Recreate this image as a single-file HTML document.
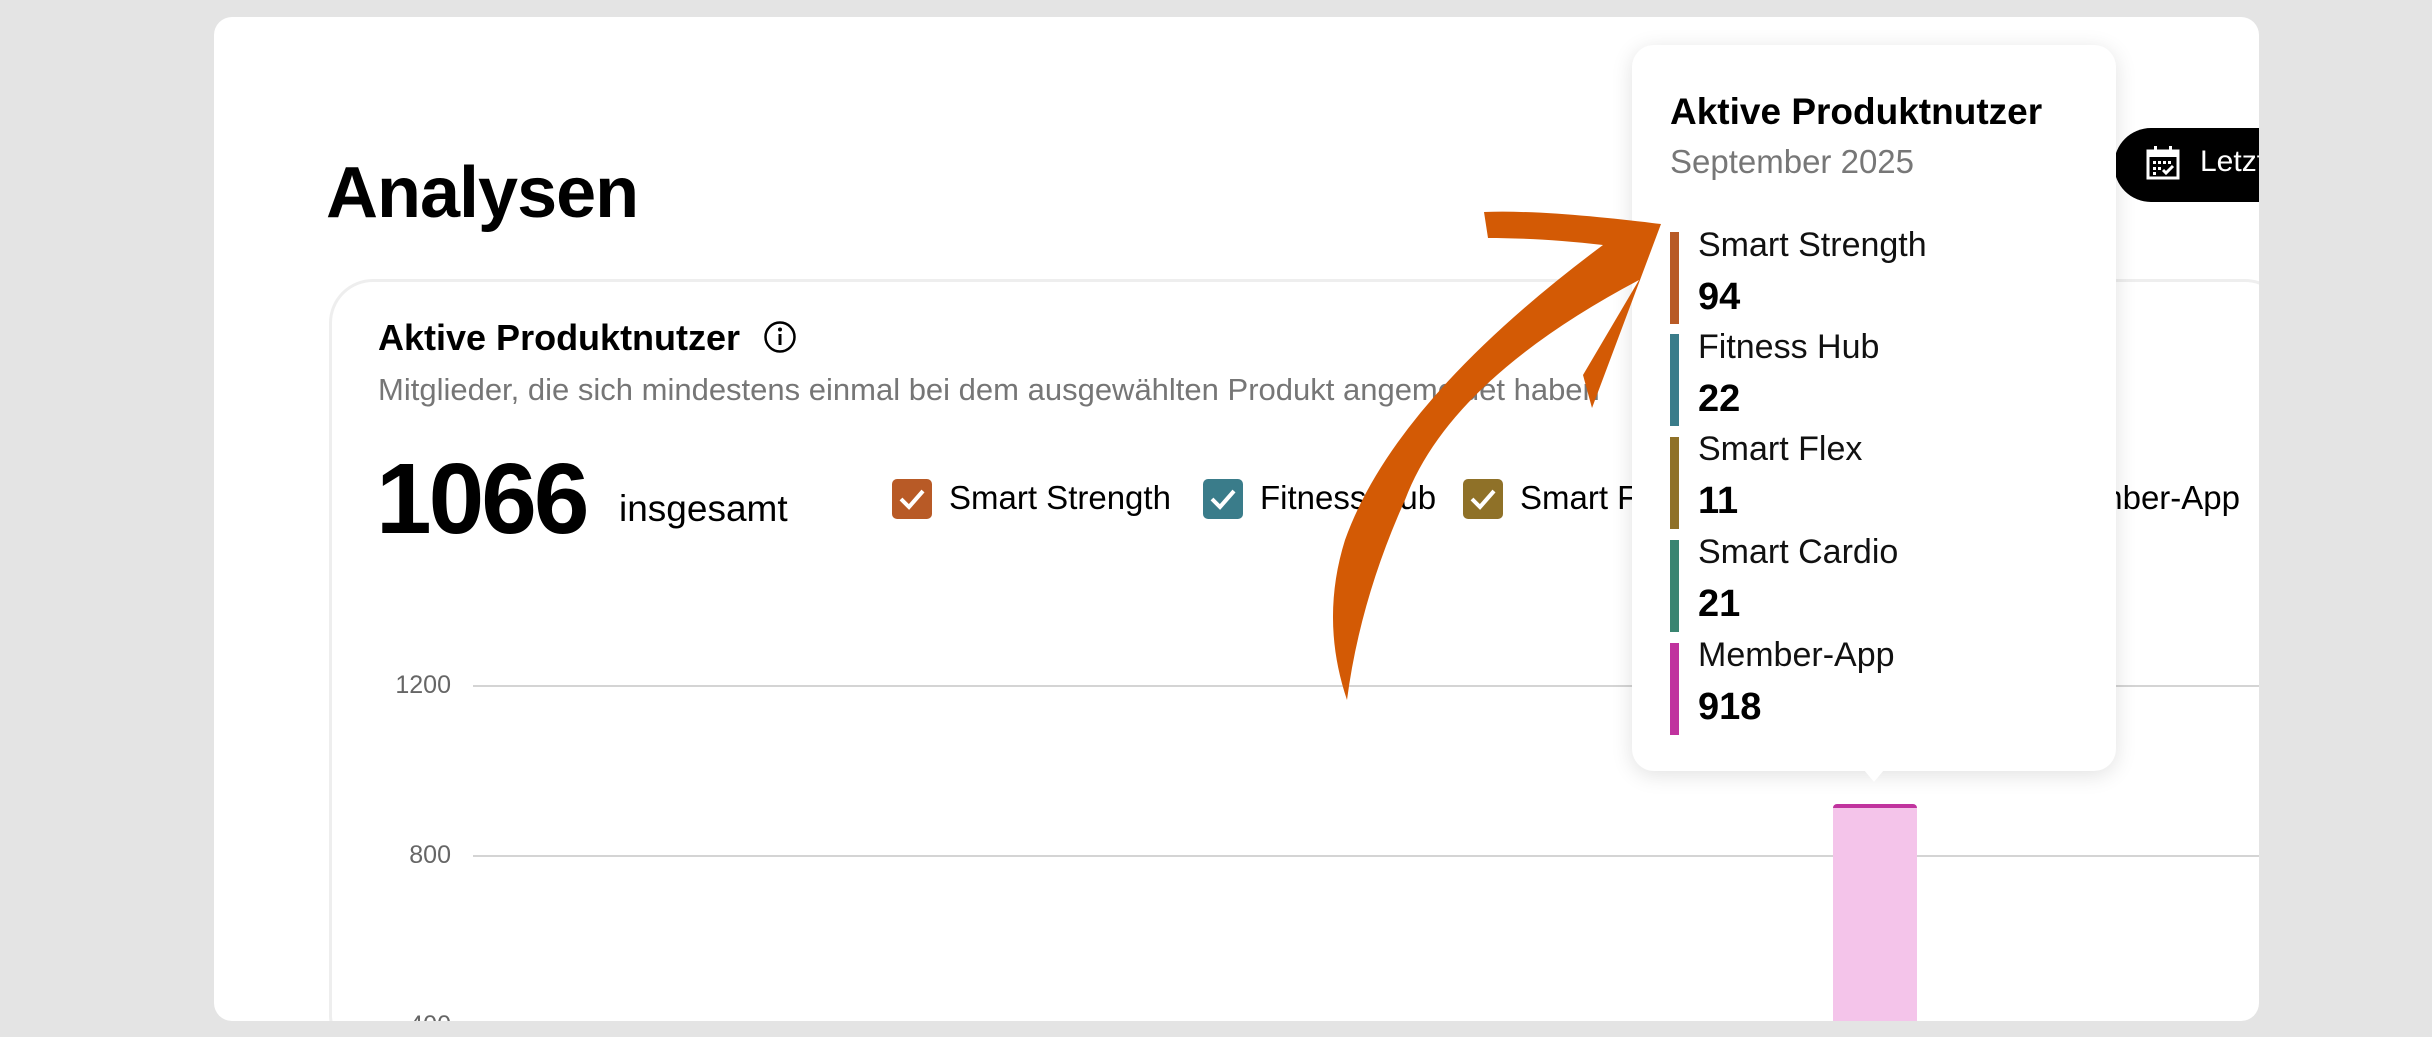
<!DOCTYPE html>
<html><head><meta charset="utf-8"><style>
*{margin:0;padding:0;box-sizing:border-box}
html,body{width:2432px;height:1037px;overflow:hidden}
body{background:#e4e4e4;position:relative;font-family:"Liberation Sans",Arial,sans-serif;color:#000}
.card{position:absolute;left:214px;top:17px;width:2045px;height:1004px;background:#fff;border-radius:18px;overflow:hidden}
.a{position:absolute;white-space:nowrap}
.inner{position:absolute;left:115px;top:262px;width:1960px;height:780px;border:3px solid #eeeeee;border-radius:44px}
.cb{position:absolute;width:40px;height:40px;border-radius:5px}
.cb svg{position:absolute;left:6px;top:7px}
.grid{position:absolute;left:259px;height:2px;background:#d4d4d4;width:1790px}
.tt{position:absolute;left:1632px;top:45px;width:484px;height:726px;background:#fff;border-radius:22px;box-shadow:0 4px 22px rgba(0,0,0,.12)}
.ent{position:absolute;left:38px;width:9px;height:92px}
.nm{position:absolute;left:66px;font-size:34px;color:#111}
.vl{position:absolute;left:66px;font-size:38px;font-weight:bold}
</style></head><body>
<div class="card">
  <div class="a" style="left:112px;top:135px;font-size:72px;font-weight:bold;letter-spacing:-1px">Analysen</div>
  <div class="a" style="left:1900px;top:111px;width:300px;height:74px;background:#000;border-radius:37px"></div>
  <svg class="a" style="left:1931px;top:128px" width="36" height="36" viewBox="0 0 36 36"><rect x="3" y="6" width="30" height="27" fill="none" stroke="#fff" stroke-width="3"/><rect x="3" y="6" width="30" height="6" fill="#fff"/><rect x="9" y="1" width="3" height="7" fill="#fff"/><rect x="24" y="1" width="3" height="7" fill="#fff"/><g fill="#fff"><rect x="8" y="16" width="3" height="3"/><rect x="13" y="16" width="3" height="3"/><rect x="18" y="16" width="3" height="3"/><rect x="23" y="16" width="3" height="3"/><rect x="8" y="22" width="3" height="3"/><rect x="13" y="22" width="3" height="3"/><rect x="8" y="27" width="3" height="3"/></g><path d="M18 25 L21 28 L28 21" stroke="#fff" stroke-width="3" fill="none"/></svg>
  <div class="a" style="left:1986px;top:128px;font-size:30px;color:#fff">Letzte</div>
  <div class="inner"></div>
  <div class="a" style="left:164px;top:300px;font-size:36px;font-weight:bold">Aktive Produktnutzer</div>
  <svg class="a" style="left:549px;top:303px" width="34" height="34" viewBox="0 0 34 34"><circle cx="17" cy="17" r="14.5" fill="none" stroke="#000" stroke-width="2.5"/><rect x="15.5" y="14" width="3" height="11" fill="#000"/><circle cx="17" cy="9.5" r="2" fill="#000"/></svg>
  <div class="a" style="left:164px;top:355px;font-size:31px;color:#767676">Mitglieder, die sich mindestens einmal bei dem ausgewählten Produkt angemeldet haben</div>
  <div class="a" style="left:162px;top:425px;font-size:100px;font-weight:bold;letter-spacing:-3px">1066</div>
  <div class="a" style="left:405px;top:471px;font-size:37px">insgesamt</div>
  <div class="cb" style="left:678px;top:462px;background:#b85a26"><svg width="28" height="26"><path d="M3 13 L11 21 L25 5" stroke="#fff" stroke-width="4" fill="none"/></svg></div>
  <div class="a" style="left:735px;top:462px;font-size:33px">Smart Strength</div>
  <div class="cb" style="left:989px;top:462px;background:#3a7c8a"><svg width="28" height="26"><path d="M3 13 L11 21 L25 5" stroke="#fff" stroke-width="4" fill="none"/></svg></div>
  <div class="a" style="left:1046px;top:462px;font-size:33px">Fitness Hub</div>
  <div class="cb" style="left:1249px;top:462px;background:#8f7128"><svg width="28" height="26"><path d="M3 13 L11 21 L25 5" stroke="#fff" stroke-width="4" fill="none"/></svg></div>
  <div class="a" style="left:1306px;top:462px;font-size:33px">Smart Flex</div>
  <div class="a" style="right:19px;top:462px;font-size:33px">Member-App</div>
  <div class="grid" style="top:668px"></div>
  <div class="grid" style="top:838px"></div>
  <div class="a" style="left:150px;top:654px;width:87px;text-align:right;font-size:25px;color:#666">1200</div>
  <div class="a" style="left:150px;top:824px;width:87px;text-align:right;font-size:25px;color:#666">800</div>
  <div class="a" style="left:150px;top:994px;width:87px;text-align:right;font-size:25px;color:#666">400</div>
  <div class="a" style="left:1619px;top:787px;width:84px;height:220px;background:#f4c4ea;border-radius:4px 4px 0 0;border-top:4px solid #c0339e"></div>
</div>
<div class="tt">
  <div class="a" style="left:38px;top:46px;font-size:37px;font-weight:bold">Aktive Produktnutzer</div>
  <div class="a" style="left:38px;top:98px;font-size:33px;color:#777">September 2025</div>
  <div class="ent" style="top:187px;background:#b85a26"></div>
  <div class="nm" style="top:181px">Smart Strength</div><div class="vl" style="top:231px">94</div>
  <div class="ent" style="top:289px;background:#3a7c8a"></div>
  <div class="nm" style="top:283px">Fitness Hub</div><div class="vl" style="top:333px">22</div>
  <div class="ent" style="top:392px;background:#8f7128"></div>
  <div class="nm" style="top:385px">Smart Flex</div><div class="vl" style="top:435px">11</div>
  <div class="ent" style="top:495px;background:#3a8571"></div>
  <div class="nm" style="top:488px">Smart Cardio</div><div class="vl" style="top:538px">21</div>
  <div class="ent" style="top:598px;background:#c0339e"></div>
  <div class="nm" style="top:591px">Member-App</div><div class="vl" style="top:641px">918</div>
</div>
<div class="a" style="left:1864px;top:770px;width:0;height:0;border-left:10px solid transparent;border-right:10px solid transparent;border-top:12px solid #fff"></div>
<svg class="a" style="left:0;top:0" width="2432" height="1037"><path d="M1484,212 C1540,210 1610,218 1661,224 L1592,408 L1583,375 L1639,280 Q1450,380 1405,500 Q1360,600 1347,700 Q1320,620 1345,540 Q1395,400 1603,245 C1560,240 1520,238 1488,238 Z" fill="#d35a05"/></svg>
</body></html>
